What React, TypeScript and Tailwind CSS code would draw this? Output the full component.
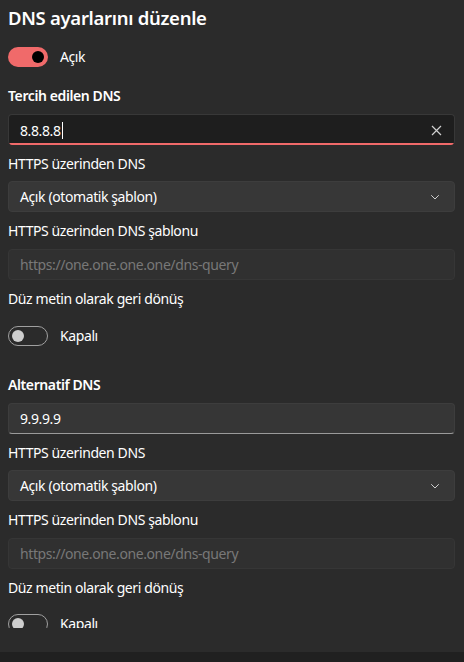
import React from "react";

const font = { fontFamily: '"Noto Sans", "Open Sans", sans-serif' };

function Toggle({ on }: { on: boolean }) {
  return on ? (
    <div className="w-[40px] h-[20px] rounded-full bg-[#f06a6a] flex items-center justify-end pr-[4px]">
      <div className="w-[12px] h-[12px] rounded-full bg-black" />
    </div>
  ) : (
    <div className="w-[40px] h-[20px] rounded-full border border-[#a0a0a0] flex items-center pl-[3px]">
      <div className="w-[12px] h-[12px] rounded-full bg-[#cecece]" />
    </div>
  );
}

function ToggleRow({ on, label, className = "" }: { on: boolean; label: string; className?: string }) {
  return (
    <div className={"flex items-center gap-[12px] " + className}>
      <Toggle on={on} />
      <span className="text-[14px] tracking-[-0.4px] text-white leading-[20px]">{label}</span>
    </div>
  );
}

function Label({ children, bold = false, className = "" }: { children: React.ReactNode; bold?: boolean; className?: string }) {
  return (
    <div className={"h-[20px] leading-[20px] text-[14px] tracking-[-0.4px] text-white " + (bold ? "font-semibold " : "") + className}>
      {children}
    </div>
  );
}

function Chevron() {
  return (
    <svg width="12" height="12" viewBox="0 0 12 12" fill="none">
      <path d="M2.5 4.5 L6 8 L9.5 4.5" stroke="#cfcfcf" strokeWidth="1" strokeLinecap="round" strokeLinejoin="round" />
    </svg>
  );
}

function Dropdown({ className = "" }: { className?: string }) {
  return (
    <div className={"h-[31px] rounded-[4px] bg-[#373737] border border-[#3d3d3d] flex items-center justify-between pl-[11px] pr-[13px] " + className}>
      <span className="text-[14px] tracking-[-0.4px] text-white">Açık (otomatik şablon)</span>
      <Chevron />
    </div>
  );
}

function Template({ className = "" }: { className?: string }) {
  return (
    <div className={"h-[31px] rounded-[4px] bg-[#303030] border border-[#363636] flex items-center pl-[11px] " + className}>
      <span className="text-[14px] tracking-[-0.4px] text-[#787878]">https://one.one.one.one/dns-query</span>
    </div>
  );
}

function Section({
  title,
  children,
  className = "",
}: {
  title: string;
  children: React.ReactNode;
  className?: string;
}) {
  return (
    <div className={"flex flex-col " + className}>
      <Label bold>{title}</Label>
      {children}
      <Label className="mt-[9px]">HTTPS üzerinden DNS</Label>
      <Dropdown className="mt-[7px]" />
      <Label className="mt-[9px]">HTTPS üzerinden DNS şablonu</Label>
      <Template className="mt-[8px]" />
      <Label className="mt-[9px]">Düz metin olarak geri dönüş</Label>
    </div>
  );
}

export default function App() {
  return (
    <div className="w-[464px] h-[662px] bg-[#2b2b2b] flex flex-col" style={font}>
      <div className="h-[628px] overflow-hidden pl-[8px] pr-[9px] flex flex-col">
        <div className="mt-[4px] h-[28px] leading-[28px] text-[18.5px] tracking-[-0.3px] font-semibold text-white">
          DNS ayarlarını düzenle
        </div>
        <ToggleRow on label="Açık" className="mt-[15px]" />

        <Section title="Tercih edilen DNS" className="mt-[19px]">
          <div className="mt-[8px] h-[31px] rounded-[4px] bg-[#1e1e1e] border border-[#383838] border-b-0 flex items-center justify-between pl-[11px] pr-[12px] relative overflow-hidden">
            <span className="text-[14px] tracking-[-0.4px] text-white flex items-center">
              8.8.8.8
              <span className="ml-[1px] w-[1px] h-[17px] bg-white inline-block" />
            </span>
            <svg width="11" height="11" viewBox="0 0 11 11">
              <path d="M1 1 L10 10 M10 1 L1 10" stroke="#d0d0d0" strokeWidth="1.2" />
            </svg>
            <div className="absolute left-0 right-0 bottom-0 h-[2px] bg-[#f06a6a]" />
          </div>
        </Section>
        <ToggleRow on={false} label="Kapalı" className="mt-[17px]" />

        <Section title="Alternatif DNS" className="mt-[29px]">
          <div className="mt-[8px] h-[31px] rounded-[4px] bg-[#363636] border border-[#3d3d3d] border-b-[#9a9a9a] flex items-center pl-[11px]">
            <span className="text-[14px] tracking-[-0.4px] text-white">9.9.9.9</span>
          </div>
        </Section>
        <ToggleRow on={false} label="Kapalı" className="mt-[16px]" />
      </div>
      <div className="flex-1" />
      <div className="h-[10px] bg-[#202020]" />
    </div>
  );
}
